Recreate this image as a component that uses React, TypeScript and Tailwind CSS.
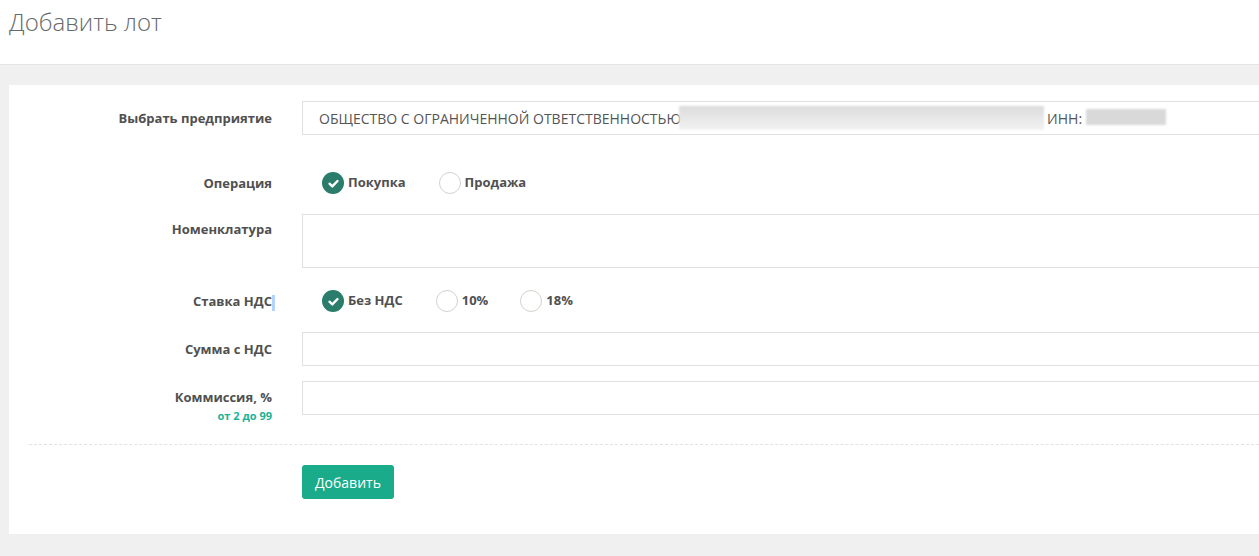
import React from 'react';

const font = { fontFamily: '"Open Sans", "Liberation Sans", sans-serif' };

const Radio = ({ checked, label, className = '' }: { checked?: boolean; label: string; className?: string }) => (
  <label className={`flex items-center gap-[4px] ${className}`}>
    {checked ? (
      <span className="w-[22px] h-[22px] rounded-full bg-[#2a7d6b] flex items-center justify-center">
        <svg width="13" height="13" viewBox="0 0 12 12" fill="none">
          <path d="M2.3 6.2 L4.9 8.7 L9.7 3.7" stroke="white" strokeWidth="2.2" strokeLinecap="round" strokeLinejoin="round" />
        </svg>
      </span>
    ) : (
      <span className="w-[22px] h-[22px] rounded-full border border-[#d6d2cc] bg-white" />
    )}
    <span className="text-[13px] font-bold text-[#505050]">{label}</span>
  </label>
);

const Row = ({ label, children, className = '' }: any) => (
  <div className={`flex ${className}`}>
    <div className="w-[263px] shrink-0 text-right text-[13px] font-bold text-[#505050]">{label}</div>
    <div className="ml-[30px] flex-1">{children}</div>
  </div>
);

export default function App() {
  return (
    <div className="w-[1259px] h-[556px] bg-[#f0f0f0] overflow-hidden" style={font}>
      <div className="h-[65px] bg-white border-b border-[#e3e6e8] px-[9px] pt-[5px]">
        <h1 className="text-[24px] font-light text-[#676a6c] leading-[33px]">Добавить лот</h1>
      </div>
      <div className="ml-[9px] mt-[20px] h-[449px] bg-white pt-[16px]">
        <Row label={<span className="leading-[34px]">Выбрать предприятие</span>}>
          <div className="h-[34px] w-[1000px] border border-[#e0e0e0] flex items-center px-[16px] text-[14px] text-[#555]">
            <span>ОБЩЕСТВО С ОГРАНИЧЕННОЙ ОТВЕТСТВЕННОСТЬЮ</span>
            <span className="ml-[-2px] w-[365px] h-[24px] bg-gradient-to-b from-[#dcdcdc] to-[#f3f3f3] blur-[1px]" />
            <span className="ml-[3px]">ИНН:</span>
            <span className="ml-[4px] w-[80px] h-[16px] bg-[#d9d9d9] blur-[1px] mb-[2px]" />
          </div>
        </Row>
        <Row label={<span className="leading-[22px]">Операция</span>} className="mt-[37px]">
          <div className="flex items-center ml-[20px]">
            <Radio checked label="Покупка" />
            <Radio label="Продажа" className="ml-[33px]" />
          </div>
        </Row>
        <Row label={<span className="leading-[30px]">Номенклатура</span>} className="mt-[20px]">
          <div className="h-[54px] w-[1000px] border border-[#e0e0e0]" />
        </Row>
        <Row
          label={
            <span className="leading-[22px]">
              Ставка НДС<span className="inline-block w-[3px] -mr-[3px] h-[16px] bg-[#b3d4fc] align-middle" />
            </span>
          }
          className="mt-[22px]"
        >
          <div className="flex items-center ml-[20px]">
            <Radio checked label="Без НДС" />
            <Radio label="10%" className="ml-[33px]" />
            <Radio label="18%" className="ml-[32px]" />
          </div>
        </Row>
        <Row label={<span className="leading-[34px]">Сумма с НДС</span>} className="mt-[20px]">
          <div className="h-[34px] w-[1000px] border border-[#e0e0e0]" />
        </Row>
        <Row label={<span className="leading-[32px]">Коммиссия, %</span>} className="mt-[15px]">
          <div className="h-[34px] w-[1000px] border border-[#e0e0e0]" />
        </Row>
        <div className="w-[263px] text-right text-[11px] font-bold text-[#1ab394] -mt-[7px] leading-[16px]">от 2 до 99</div>
        <div className="ml-[20px] mt-[20px] border-t border-dashed border-[#e3e3e3]" />
        <div className="ml-[293px] mt-[20px]">
          <button className="h-[34px] px-[13px] rounded-[3px] bg-[#1aab8a] text-white text-[14px]">Добавить</button>
        </div>
      </div>
    </div>
  );
}
